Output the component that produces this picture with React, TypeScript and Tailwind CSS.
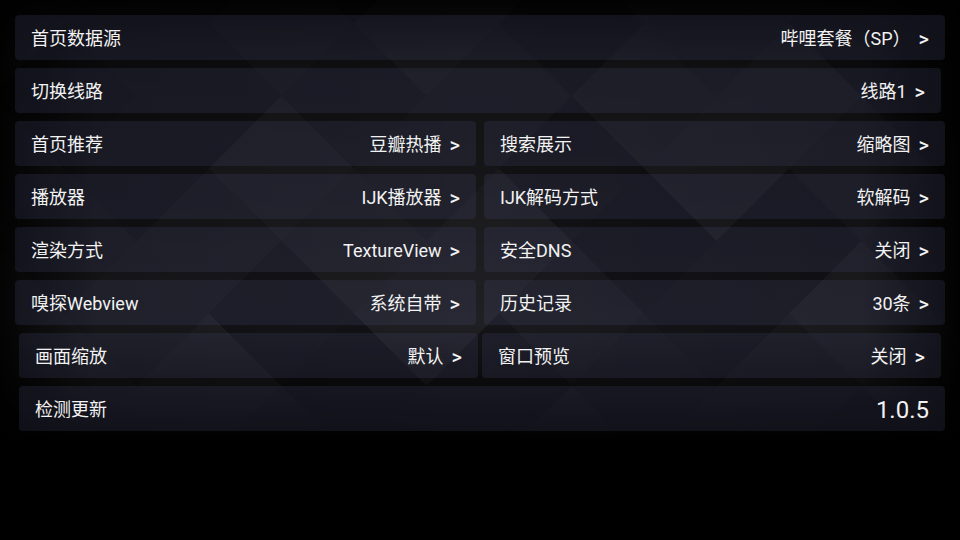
import type { ReactNode } from 'react';

type Cell = { label: string; value: string; big?: boolean };

const FONT = 'font-[Roboto,"Noto_Sans_CJK_SC",sans-serif]';

// diamond lattice behind the settings list
function Backdrop() {
  const tiles: { cx: number; cy: number; o: number }[] = [];
  for (let j = -2; j < 10; j++) {
    for (let i = -2; i < 9; i++) {
      const cx = 64 + 145 * i + (Math.abs(j) % 2) * 72.5;
      const cy = 96 + 72.5 * j;
      const h = Math.abs((i * 7 + j * 13 + i * j * 3) % 6);
      tiles.push({ cx, cy, o: h * 0.012 });
    }
  }
  const r = 72.5;
  return (
    <svg className="absolute inset-0" width="960" height="540" viewBox="0 0 960 540">
      <defs>
        <linearGradient id="fadeV" x1="0" y1="0" x2="0" y2="1">
          <stop offset="0" stopColor="#000" stopOpacity="0.9" />
          <stop offset="0.12" stopColor="#000" stopOpacity="0.35" />
          <stop offset="0.6" stopColor="#000" stopOpacity="0" />
          <stop offset="0.82" stopColor="#000" stopOpacity="1" />
          <stop offset="1" stopColor="#000" stopOpacity="1" />
        </linearGradient>
        <linearGradient id="fadeH" x1="0" y1="0" x2="1" y2="0">
          <stop offset="0" stopColor="#000" stopOpacity="0.9" />
          <stop offset="0.1" stopColor="#000" stopOpacity="0.2" />
          <stop offset="0.5" stopColor="#000" stopOpacity="0" />
          <stop offset="0.9" stopColor="#000" stopOpacity="0.2" />
          <stop offset="1" stopColor="#000" stopOpacity="0.95" />
        </linearGradient>
      </defs>
      <rect width="960" height="540" fill="#131317" />
      {tiles.map((t, k) => (
        <polygon
          key={k}
          points={`${t.cx},${t.cy - r} ${t.cx + r},${t.cy} ${t.cx},${t.cy + r} ${t.cx - r},${t.cy}`}
          fill="#ffffff"
          fillOpacity={t.o}
        />
      ))}
      <rect width="960" height="540" fill="url(#fadeH)" />
      <rect width="960" height="540" fill="url(#fadeV)" />
    </svg>
  );
}

function Item({ cell, className }: { cell: Cell; className: string }) {
  return (
    <div
      className={`h-[45px] rounded-[4px] bg-[#464b6e]/[0.22] flex items-center justify-between px-4 pt-[2px] text-[18px] text-[#f2f2f2] ${className}`}
    >
      <span className="whitespace-nowrap">{cell.label}</span>
      {cell.big ? (
        <span className="text-[24px] leading-none">{cell.value}</span>
      ) : (
        <span className="whitespace-nowrap flex items-center">
          {cell.value}
          <span className="ml-[8px] text-[20px] font-medium leading-none pt-[1px]">&gt;</span>
        </span>
      )}
    </div>
  );
}

function Pair({ children, className }: { children: ReactNode; className: string }) {
  return <div className={`flex ${className}`}>{children}</div>;
}

const pairs: [Cell, Cell][] = [
  [{ label: '首页推荐', value: '豆瓣热播' }, { label: '搜索展示', value: '缩略图' }],
  [{ label: '播放器', value: 'IJK播放器' }, { label: 'IJK解码方式', value: '软解码' }],
  [{ label: '渲染方式', value: 'TextureView' }, { label: '安全DNS', value: '关闭' }],
  [{ label: '嗅探Webview', value: '系统自带' }, { label: '历史记录', value: '30条' }],
];

export default function App() {
  return (
    <div className={`relative w-[960px] h-[540px] overflow-hidden bg-black ${FONT}`}>
      <Backdrop />
      <div className="relative flex flex-col gap-2 pt-[15px]">
        <Item className="ml-[15px] w-[930px]" cell={{ label: '首页数据源', value: '哔哩套餐（SP）' }} />
        <Item className="ml-[15px] w-[926px]" cell={{ label: '切换线路', value: '线路1' }} />
        {pairs.map(([a, b]) => (
          <Pair key={a.label} className="ml-[15px] gap-2">
            <Item className="w-[461px]" cell={a} />
            <Item className="w-[461px]" cell={b} />
          </Pair>
        ))}
        <Pair className="ml-[19px] gap-1">
          <Item className="w-[459px]" cell={{ label: '画面缩放', value: '默认' }} />
          <Item className="w-[459px]" cell={{ label: '窗口预览', value: '关闭' }} />
        </Pair>
        <Item className="ml-[19px] w-[926px]" cell={{ label: '检测更新', value: '1.0.5', big: true }} />
      </div>
    </div>
  );
}
